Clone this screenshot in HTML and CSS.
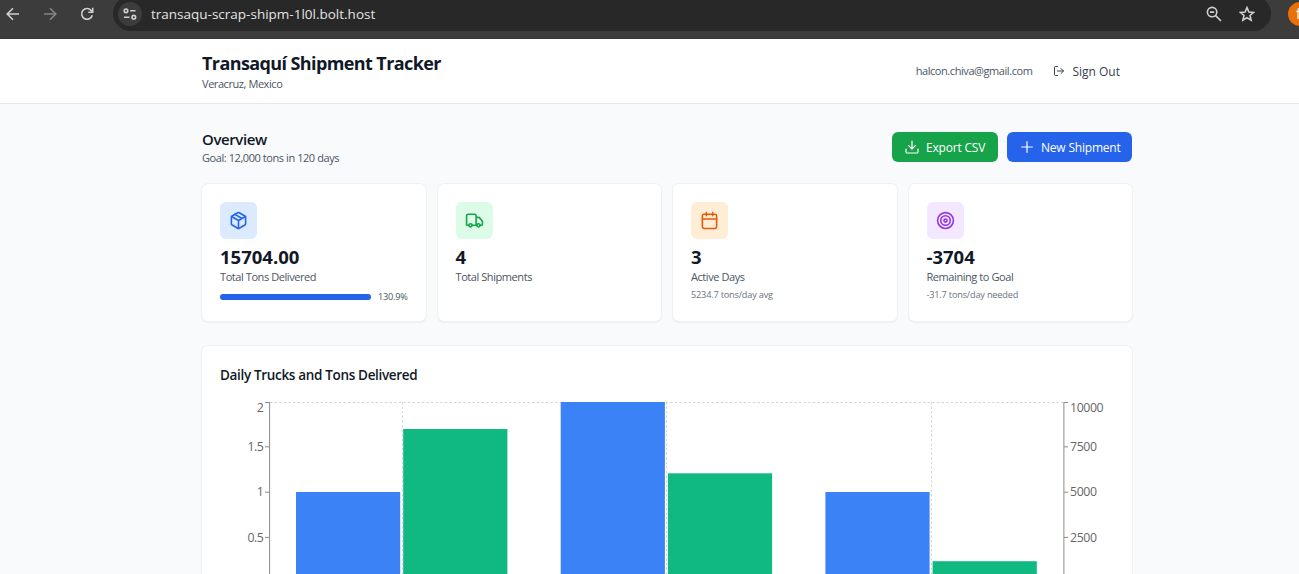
FILE: index.html
```html
<!DOCTYPE html>
<html lang="en">
<head>
  <meta charset="UTF-8" />
  <meta name="viewport" content="width=device-width, initial-scale=1.0"/>
  <title>Transaquí Shipment Tracker</title>
  <link rel="stylesheet" href="styles.css">
</head>
<body>

  <!-- Browser bar -->
  <div class="browser">
    <div class="nav-icons">
      <svg width="14" height="14" viewBox="0 0 14 14"><path d="M13 7H1.5M7 1.2L1.2 7L7 12.8"/></svg>
      <svg class="dim" width="14" height="14" viewBox="0 0 14 14"><path d="M1 7h11.5M7 1.2L12.8 7L7 12.8"/></svg>
      <svg width="14" height="14" viewBox="0 0 14 14"><path d="M12.3 8.2A5.4 5.4 0 1 1 11.2 3.4L12.6 4.9"/><path d="M12.7 0.8V5.2H8.3"/></svg>
    </div>
    <div class="omnibox">
      <span class="site-info">
        <svg width="14" height="12" viewBox="0 0 14 12"><circle cx="3" cy="2.8" r="1.8"/><path d="M7.2 2.8H12.5M1 9.2H6.5"/><circle cx="10.8" cy="9.2" r="1.8"/></svg>
      </span>
      <span class="url">transaqu-scrap-shipm-1l0l.bolt.host</span>
      <svg class="zoom-icon" width="16" height="16" viewBox="0 0 16 16"><circle cx="6.1" cy="6.1" r="4.7"/><path d="M9.6 9.6L15 15M4 6.1h4.2"/></svg>
      <svg class="star-icon" width="16" height="16" viewBox="0 0 16 16"><path d="M8 1.6L9.9 6L14.6 6.4L11 9.5L12.1 14.1L8 11.7L3.9 14.1L5 9.5L1.4 6.4L6.1 6Z"/></svg>
    </div>
    <div class="avatar">f</div>
  </div>

  <header class="header">
    <div class="container header-row">
      <div>
        <h1>Transaquí Shipment Tracker</h1>
        <p class="location">Veracruz, Mexico</p>
      </div>
      <div class="user">
        <span class="email">halcon.chiva@gmail.com</span>
        <button class="sign-out">
          <svg class="icon" width="12" height="12" viewBox="0 0 24 24"><path d="M9 21H5a2 2 0 0 1-2-2V5a2 2 0 0 1 2-2h4"/><path d="M16 17l5-5-5-5M21 12H9"/></svg>
          <span>Sign Out</span>
        </button>
      </div>
    </div>
  </header>

  <main class="container main">
    <div class="overview">
      <div>
        <h2>Overview</h2>
        <p class="goal">Goal: 12,000 tons in 120 days</p>
      </div>
      <div class="actions">
        <button class="btn green">
          <svg class="icon" width="16" height="16" viewBox="0 0 24 24"><path d="M21 15v4a2 2 0 0 1-2 2H5a2 2 0 0 1-2-2v-4"/><path d="M7 10l5 5 5-5M12 15V3"/></svg>
          <span>Export CSV</span>
        </button>
        <button class="btn blue">
          <svg class="icon" width="16" height="16" viewBox="0 0 24 24"><path d="M4 12h16M12 4v16"/></svg>
          <span>New Shipment</span>
        </button>
      </div>
    </div>

    <div class="cards">
      <div class="card">
        <div class="tile tile-blue">
          <svg class="icon" width="19" height="19" viewBox="0 0 24 24"><path d="M11 21.73a2 2 0 0 0 2 0l7-4A2 2 0 0 0 21 16V8a2 2 0 0 0-1-1.73l-7-4a2 2 0 0 0-2 0l-7 4A2 2 0 0 0 3 8v8a2 2 0 0 0 1 1.73z"/><path d="M12 22V12M3.3 7l8.7 5 8.7-5M7.5 4.27l9 5.15"/></svg>
        </div>
        <div class="value">15704.00</div>
        <div class="label">Total Tons Delivered</div>
        <div class="progress">
          <div class="track"><div class="fill" style="width: 100%"></div></div>
          <span class="percent">130.9%</span>
        </div>
      </div>
      <div class="card">
        <div class="tile tile-green">
          <svg class="icon" width="19" height="19" viewBox="0 0 24 24"><path d="M14 18V6a2 2 0 0 0-2-2H4a2 2 0 0 0-2 2v11a1 1 0 0 0 1 1h2M15 18H9M19 18h2a1 1 0 0 0 1-1v-3.65a1 1 0 0 0-.22-.624l-3.48-4.35A1 1 0 0 0 17.52 8H14"/><circle cx="17" cy="18" r="2"/><circle cx="7" cy="18" r="2"/></svg>
        </div>
        <div class="value">4</div>
        <div class="label">Total Shipments</div>
      </div>
      <div class="card">
        <div class="tile tile-orange">
          <svg class="icon" width="19" height="19" viewBox="0 0 24 24"><path d="M8 2v4M16 2v4M3 10h18"/><rect x="3" y="4" width="18" height="18" rx="2"/></svg>
        </div>
        <div class="value">3</div>
        <div class="label">Active Days</div>
        <div class="note">5234.7 tons/day avg</div>
      </div>
      <div class="card">
        <div class="tile tile-purple">
          <svg class="icon" width="19" height="19" viewBox="0 0 24 24"><circle cx="12" cy="12" r="10"/><circle cx="12" cy="12" r="6"/><circle cx="12" cy="12" r="2"/></svg>
        </div>
        <div class="value">-3704</div>
        <div class="label">Remaining to Goal</div>
        <div class="note">-31.7 tons/day needed</div>
      </div>
    </div>

    <section class="chart-card">
      <h3>Daily Trucks and Tons Delivered</h3>
      <svg class="chart" width="893" height="230" viewBox="0 0 893 230">
        <!-- Grid -->
        <g class="grid">
          <path d="M50 4.5H844M182.5 4V185M446.5 4V185M711.5 4V185"/>
        </g>
        <!-- Trucks -->
        <g class="trucks">
          <rect x="76" y="94" width="104.2" height="91"/>
          <rect x="340.7" y="4" width="104.2" height="181"/>
          <rect x="605.4" y="94" width="104.2" height="91"/>
        </g>
        <!-- Tons -->
        <g class="tons">
          <rect x="183.2" y="31" width="104.2" height="154"/>
          <rect x="447.9" y="75.3" width="104.2" height="109.7"/>
          <rect x="712.6" y="163.2" width="104.2" height="21.8"/>
        </g>
        <g class="axis">
          <path d="M49.6 4V185M45 4.5H50M45 48.8H50M45 94.2H50M45 139.4H50"/>
          <path d="M843.9 4V185M844 4.5H848M844 48.8H848M844 94.2H848M844 139.4H848"/>
        </g>
        <g class="ticks left">
          <text x="43.5" y="14">2</text>
          <text x="43.5" y="53">1.5</text>
          <text x="43.5" y="98">1</text>
          <text x="43.5" y="144">0.5</text>
        </g>
        <g class="ticks">
          <text x="850" y="14">10000</text>
          <text x="850" y="53">7500</text>
          <text x="850" y="98">5000</text>
          <text x="850" y="144">2500</text>
        </g>
      </svg>
    </section>
  </main>

</body>
</html>
```
FILE: styles.css
```css
* {
  box-sizing: border-box;
  margin: 0;
  padding: 0;
}

body {
  height: 574px;
  overflow: hidden;
  background: #f9fafb;
  color: #111827;
  font-family: "Open Sans", "Noto Sans", sans-serif;
}

button {
  border: none;
  background: none;
  font-family: inherit;
  display: flex;
  align-items: center;
  white-space: nowrap;
  cursor: pointer;
}

svg {
  flex-shrink: 0;
}

.icon {
  fill: none;
  stroke: currentColor;
  stroke-width: 2;
  stroke-linecap: round;
  stroke-linejoin: round;
}

/* Browser bar */
.browser {
  height: 39px;
  display: flex;
  align-items: flex-start;
  background: #3c3c3c;
  border-bottom: 1px solid #353535;
  overflow: hidden;
}

.browser svg {
  fill: none;
  stroke: #d0d0d0;
  stroke-width: 1.6;
}

.browser svg.dim {
  stroke: #858585;
}

.nav-icons {
  display: flex;
  flex-shrink: 0;
  gap: 23px;
  width: 113px;
  padding: 7px 0 0 6px;
}

.omnibox {
  width: 1158px;
  height: 35px;
  flex-shrink: 0;
  margin-top: -4px;
  padding: 1px 16px 0 5px;
  display: flex;
  align-items: center;
  background: #282828;
  border-radius: 18px;
}

.site-info {
  width: 24px;
  height: 24px;
  border-radius: 50%;
  background: #3c3c3c;
  display: flex;
  align-items: center;
  justify-content: center;
}

.url {
  flex: 1;
  margin-left: 9px;
  font-size: 13.5px;
  color: #e3e3e3;
}

.star-icon {
  margin-left: 17px;
}

.avatar {
  width: 24px;
  height: 24px;
  flex-shrink: 0;
  margin: 2px 0 0 17px;
  padding-left: 8px;
  border-radius: 50%;
  background: #e8710a;
  color: #fff;
  font-size: 14px;
  line-height: 24px;
}

/* Header */
.container {
  width: 930px;
  margin-left: 202px;
}

.header {
  height: 65px;
  background: #fff;
  border-bottom: 1px solid #e5e7eb;
}

.header-row {
  height: 64px;
  display: flex;
  justify-content: space-between;
  align-items: center;
}

h1 {
  font-size: 18px;
  line-height: 25px;
  font-weight: 700;
  letter-spacing: -0.6px;
}

.location,
.goal,
.label,
.email {
  font-size: 11px;
  line-height: 16px;
  letter-spacing: -0.43px;
  color: #4b5563;
}

.user {
  display: flex;
  align-items: center;
  gap: 21px;
  padding-right: 12px;
}

.sign-out {
  gap: 7px;
  font-size: 12px;
  color: #374151;
}

/* Overview */
.main {
  padding-top: 28px;
}

.overview {
  height: 52px;
  display: flex;
  justify-content: space-between;
  align-items: flex-start;
}

h2 {
  font-size: 15px;
  line-height: 15px;
  font-weight: 600;
  letter-spacing: -0.4px;
}

.goal {
  line-height: 22px;
}

.actions {
  display: flex;
  gap: 9px;
}

.btn {
  height: 30px;
  padding: 0 12px;
  gap: 6px;
  border-radius: 6px;
  color: #fff;
  font-size: 12px;
  letter-spacing: -0.2px;
}

.btn .icon {
  stroke-width: 1.8;
}

.green {
  width: 106px;
  background: #16a34a;
}

.blue {
  width: 125px;
  background: #2563eb;
}

/* Stat cards */
.cards {
  display: grid;
  grid-template-columns: repeat(4, minmax(0, 1fr));
  gap: 12px;
}

.card,
.chart-card {
  background: #fff;
  border-radius: 6px;
  box-shadow: 0 0 0 1px #eff1f3, 0 1px 2px rgba(0, 0, 0, 0.14);
}

.card {
  height: 137px;
  padding: 18px;
}

.tile {
  width: 37px;
  height: 37px;
  border-radius: 6px;
  display: flex;
  align-items: center;
  justify-content: center;
}

.tile-blue {
  background: #dbeafe;
  color: #2563eb;
}

.tile-green {
  background: #dcfce7;
  color: #16a34a;
}

.tile-orange {
  background: #ffedd5;
  color: #ea580c;
}

.tile-purple {
  background: #f3e8ff;
  color: #9333ea;
}

.value {
  margin-top: 6px;
  font-size: 18.5px;
  line-height: 24px;
  font-weight: 700;
}

.label {
  line-height: 15px;
}

.note {
  margin-top: 4px;
  font-size: 9.2px;
  line-height: 14px;
  letter-spacing: -0.2px;
  color: #6b7280;
}

.progress {
  display: flex;
  align-items: center;
  gap: 7px;
  margin-top: 6px;
}

.track {
  width: 151px;
  height: 6px;
  flex-shrink: 0;
  border-radius: 3px;
  background: #e5e7eb;
}

.fill {
  height: 6px;
  border-radius: 3px;
  background: #2563eb;
}

.percent {
  font-size: 9.2px;
  line-height: 14px;
  letter-spacing: -0.25px;
  color: #4b5563;
}

/* Chart */
.chart-card {
  height: 300px;
  margin-top: 25px;
  padding: 20px 18px;
}

h3 {
  font-size: 13.5px;
  line-height: 18px;
  font-weight: 600;
  letter-spacing: -0.33px;
}

.chart {
  display: block;
  margin-top: 14px;
}

.grid path {
  fill: none;
  stroke: #d4d4d4;
  stroke-dasharray: 2.3 2.3;
}

.trucks {
  fill: #3b82f6;
}

.tons {
  fill: #10b981;
}

.axis path {
  fill: none;
  stroke: #8c8c8c;
}

.ticks {
  fill: #666;
  font-size: 12.3px;
  letter-spacing: -0.4px;
}

.left {
  text-anchor: end;
}
```
